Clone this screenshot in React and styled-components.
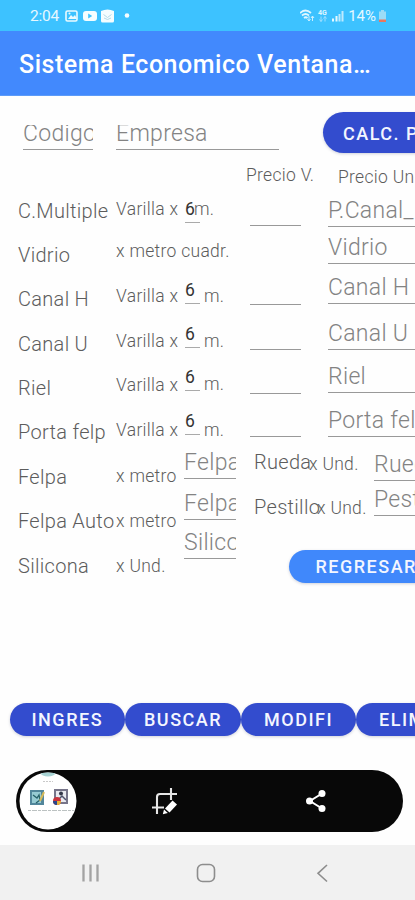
import React from "react";
import styled, { createGlobalStyle } from "styled-components";

const Global = createGlobalStyle`
  * { box-sizing: border-box; }
  body { margin: 0; background: #fefefe; }
`;

const Screen = styled.div`
  width: 415px;
  height: 900px;
  overflow: hidden;
  display: flex;
  flex-direction: column;
  background: #fefefe;
  font-family: Roboto, "Liberation Sans", sans-serif;
  white-space: nowrap;
`;

const StatusBar = styled.header`
  height: 31px;
  flex: none;
  padding: 1px 28px 0 30px;
  display: flex;
  align-items: center;
  justify-content: space-between;
  background: #3dc2ff;
  color: #e6f8ff;
  font-size: 15.5px;
`;

const StatusGroup = styled.div`
  display: flex;
  align-items: center;
  gap: ${(p) => p.$gap}px;
`;

const Clock = styled.span`
  margin-right: 2px;
  letter-spacing: -0.2px;
`;

const Battery = styled.span`
  font-size: 15px;
  letter-spacing: 0;
`;

const AppBar = styled.h1`
  height: 65px;
  flex: none;
  margin: 0;
  padding: 3px 19px 0;
  display: flex;
  align-items: center;
  background: #4289fd;
  border-bottom: 1px solid #5d9bf8;
  color: #fff;
  font-size: 25px;
  font-weight: 500;
  letter-spacing: 0.54px;
`;

const TopRow = styled.div`
  height: 64px;
  flex: none;
  display: flex;
  align-items: flex-start;
  padding: 16px 0 0 23px;
`;

const Column = styled.div`
  width: ${(p) => p.$w}px;
  flex: none;
  display: flex;
  flex-direction: column;
  margin-left: ${(p) => p.$ml || 0}px;
`;

const Columns = styled.div`
  display: flex;
  align-items: flex-start;
  height: ${(p) => p.$h}px;
  flex: none;
`;

const Slot = styled.div`
  height: ${(p) => p.$h}px;
  flex: none;
  display: flex;
  align-items: flex-end;
  margin-left: ${(p) => p.$ml || 0}px;
`;

const Label = styled.span`
  font-size: 20px;
  font-weight: 300;
  line-height: 24px;
  letter-spacing: 0.3px;
  color: #5c5c5c;
`;

const Unit = styled.span`
  font-size: 17.5px;
  font-weight: 300;
  line-height: 22px;
  letter-spacing: 0.3px;
  color: #5c5c5c;
`;

const Field = styled.div`
  width: ${(p) => p.$w}px;
  height: ${(p) => p.$clip || 30}px;
  flex: none;
  overflow: hidden;
  display: flex;
  align-items: flex-end;
  padding-bottom: 1.5px;
  border-bottom: 1px solid #999;
  color: #838383;
  font-size: 23px;
  font-weight: 300;
  line-height: 28px;
  letter-spacing: 0.3px;
`;

const Quantity = styled(Field)`
  height: 24px;
  padding-bottom: 2px;
  border-color: #aaa;
  color: #333;
  font-size: 17.5px;
  font-weight: 400;
  line-height: 22px;
`;

const Pill = styled.button`
  width: ${(p) => p.$w}px;
  height: ${(p) => p.$h || 32.5}px;
  flex: none;
  padding: 1px 0 0 ${(p) => p.$pad}px;
  margin-left: ${(p) => p.$ml || 0}px;
  border: 0;
  border-radius: 22px;
  background: ${(p) => (p.$light ? "#4088fb" : "#334cce")};
  box-shadow: 0 1px 3px rgba(40, 50, 90, 0.22);
  color: #f3f6ff;
  font: 500 18px Roboto, "Liberation Sans", sans-serif;
  letter-spacing: 1.5px;
  text-align: left;
`;

const Form = styled.main`
  height: 543px;
  flex: none;
  display: flex;
  padding-left: 18px;
`;

const Actions = styled.div`
  height: 67px;
  flex: none;
  display: flex;
  align-items: flex-start;
  padding-left: 9.5px;
`;

const CaptureBar = styled.section`
  width: 387px;
  height: 62px;
  flex: none;
  margin-left: 16px;
  border-radius: 31px;
  background: #080808;
  display: flex;
  align-items: center;
  padding-left: 3px;
`;

const CropSlot = styled.div`
  width: 26px;
  height: 28px;
  margin-left: 74px;
`;

const ShareSlot = styled.div`
  width: 22px;
  height: 24px;
  margin-left: 128px;
`;

const NavBar = styled.nav`
  height: 55px;
  flex: none;
  margin-top: 13px;
  padding-left: 81px;
  display: flex;
  align-items: center;
  background: #f1f1f1;
`;

const NavIcon = styled.svg`
  flex: none;
  margin-left: ${(p) => p.$ml || 0}px;
`;

const labels = ["C.Multiple", "Vidrio", "Canal H", "Canal U", "Riel", "Porta felp", "Felpa", "Felpa Auto", "Silicona"];

const units = [
  ["Varilla x", 60],
  ["x metro cuadr.", 42],
  ["Varilla x", 45],
  ["Varilla x", 45],
  ["Varilla x", 44],
  ["Varilla x", 45],
  ["x metro", 46],
  ["x metro", 45],
  ["x Und.", 45],
];

const quantities = [63, 81, 44, 43, 44];
const meters = [60, 87, 45, 43, 46];
const priceLines = [40, 79, 45, 44, 43];

const unitPrices = [
  ["P.Canal_M", 39],
  ["Vidrio", 37],
  ["Canal H", 40],
  ["Canal U", 46],
  ["Riel", 43],
  ["Porta felpa", 44],
];

const stock = [
  ["Felpa", 37],
  ["Felpa A", 41],
  ["Silicona", 39],
];

function StatusLeftIcons() {
  return (
    <svg width="68" height="16" viewBox="0 0 68 16">
      <rect x="2" y="3" width="11" height="10" rx="1.5" fill="none" stroke="#eafaff" strokeWidth="1.6" />
      <path d="M4 11l3-4 2 2 2-2 2 4z" fill="#eafaff" />
      <circle cx="5.5" cy="5.5" r="1" fill="#eafaff" />
      <rect x="19" y="3" width="14" height="10" rx="3" fill="#f5fdff" />
      <path d="M24.200 5.600v4.800l4-2.400z" fill="#3dc2ff" />
      <path d="M37 3Q43.500 0 50 3V13Q50 14.500 48.500 14.500H38.500Q37 14.500 37 13Z" fill="#f5fdff" />
      <path d="M39.500 6.500l4 3 4-3M40 10q3.500 3 7 0" fill="none" stroke="#b4dae8" />
      <circle cx="63" cy="7.500" r="2.300" fill="#f5fdff" />
    </svg>
  );
}

function SignalIcons() {
  return (
    <svg width="46" height="16" viewBox="0 0 46 16">
      <path d="M0 5Q5.500 0 11 5M2 7.500q3.500-3 7 0M4 10q1.800-1.500 3.500 0" fill="none" stroke="#dff6ff" strokeWidth="1.700" />
      <path d="M9 8v5m-1.500-2L9 13l1.500-2M12.500 13V8M11 10l1.500-2L14 10" fill="none" stroke="#c9efff" />
      <text x="18" y="7" fontSize="7" fontWeight="700" fill="#dff6ff">4G</text>
      <path d="M21 8.500v5m-1.500-2l1.500 2 1.500-2M25 13.500v-5m-1.500 2l1.500-2 1.500 2" fill="none" stroke="#9fdfff" />
      <path d="M33 13.500v-3M36.500 13.500V8" stroke="#e6f8ff" strokeWidth="2" />
      <path d="M39.500 13.500V6M42.500 13.500V3" stroke="#bdeaff" strokeWidth="2" />
    </svg>
  );
}

function BatteryIcon() {
  return (
    <svg width="9" height="14" viewBox="0 0 9 14">
      <path d="M3 1h3v1.500H8V13H1V2.500h2z" fill="#9bdcf7" />
      <path d="M1 10.500h7V13H1z" fill="#e8775f" />
    </svg>
  );
}

function Thumbnail() {
  return (
    <svg width="58" height="58" viewBox="0 0 58 58">
      <defs>
        <clipPath id="thumb"><circle cx="29" cy="29" r="28.500" /></clipPath>
      </defs>
      <g clipPath="url(#thumb)">
        <rect width="58" height="58" fill="#fff" />
        <ellipse cx="29" cy="1.500" rx="7" ry="3" fill="#a8d3d4" />
        <path d="M24 9.500h10" stroke="#c9c9c9" strokeDasharray="2 1" />
        <rect x="11" y="18" width="14" height="15" fill="#52869b" />
        <rect x="13" y="20" width="9" height="11" fill="#97cbd3" />
        <path d="M14 23l4 3 2-3 1 5-4 3" fill="none" stroke="#27636a" strokeWidth="1.300" />
        <path d="M25 20l-4 9" stroke="#d7ba5a" strokeWidth="2" />
        <rect x="35" y="17" width="14" height="15" fill="#77758a" />
        <rect x="37" y="19" width="10" height="11" fill="#e9e9ef" />
        <circle cx="42" cy="21.500" r="2" fill="#333849" />
        <path d="M39 28l4-4 4 4" stroke="#4e526b" strokeWidth="1.500" fill="none" />
        <circle cx="38" cy="29" r="4" fill="#c8333d" />
        <path d="M38 29h4a4 4 0 01-4 4z" fill="#e6b23a" />
        <path d="M38 29v4a4 4 0 01-4-4z" fill="#29468d" />
        <path d="M9 38.500h46" stroke="#bcc2c2" strokeDasharray="3 1 5 1" />
      </g>
    </svg>
  );
}

function CropIcon() {
  return (
    <svg width="26" height="28" viewBox="0 0 26 28">
      <path d="M1 20.500h12M6 27V10q0-3 3-3h17M20 1v12" fill="none" stroke="#e6e6e6" strokeWidth="2.100" />
      <path d="M21.500 13.500l4.500 4-7.500 8-4.500-4z" fill="#fff" />
      <path d="M13 22.500l3.800 3.500-5 1.200z" fill="#fff" />
    </svg>
  );
}

function ShareIcon() {
  return (
    <svg width="22" height="24" viewBox="0 0 22 24">
      <path d="M17 4.500L5 12l12 7.500" fill="none" stroke="#fff" strokeWidth="2" />
      <circle cx="17" cy="4.500" r="3.500" fill="#fff" />
      <circle cx="4.500" cy="12" r="3.500" fill="#fff" />
      <circle cx="17" cy="19.500" r="3.500" fill="#fff" />
    </svg>
  );
}

export default function App() {
  return (
    <Screen>
      <Global />
      <StatusBar>
        <StatusGroup $gap={3}>
          <Clock>2:04</Clock>
          <StatusLeftIcons />
        </StatusGroup>
        <StatusGroup $gap={2}>
          <SignalIcons />
          <Battery>14%</Battery>
          <BatteryIcon />
        </StatusGroup>
      </StatusBar>
      <AppBar>Sistema Economico Ventana…</AppBar>

      <TopRow>
        <Column $w={93}>
          <Slot $h={38}><Field $w={70} $clip={25}>Codigo</Field></Slot>
        </Column>
        <Column $w={207}>
          <Slot $h={38}><Field $w={163} $clip={25}>Empresa</Field></Slot>
        </Column>
        <Pill $w={150} $h={41} $pad={20}>CALC. PRECIO</Pill>
      </TopRow>

      <Form>
        <Column $w={98}>
          {labels.map((t, i) => (
            <Slot key={t} $h={i ? 44.4 : 62.5}><Label>{t}</Label></Slot>
          ))}
        </Column>
        <Column $w={68}>
          {units.map(([t, h], i) => (
            <Slot key={i} $h={h}><Unit>{t}</Unit></Slot>
          ))}
        </Column>
        <Column $w={400}>
          <Columns $h={282}>
            <Column $w={21} $ml={1}>
              {quantities.map((h, i) => (
                <Slot key={i} $h={h}><Quantity $w={15}>6</Quantity></Slot>
              ))}
            </Column>
            <Column $w={40}>
              {meters.map((h, i) => (
                <Slot key={i} $h={h} $ml={i ? -2 : -12}><Unit>m.</Unit></Slot>
              ))}
            </Column>
            <Column $w={82}>
              <Slot $h={26}><Unit>Precio V.</Unit></Slot>
              {priceLines.map((h, i) => (
                <Slot key={i} $h={h} $ml={4}><Field $w={51} /></Slot>
              ))}
            </Column>
            <Column $w={180}>
              <Slot $h={28} $ml={10}><Unit>Precio Unitario</Unit></Slot>
              {unitPrices.map(([t, h]) => (
                <Slot key={t} $h={h}><Field $w={150}>{t}</Field></Slot>
              ))}
            </Column>
          </Columns>
          <Columns $h={200}>
            <Column $w={52}>
              {stock.map(([t, h]) => (
                <Slot key={t} $h={h}><Field $w={52} $clip={27}>{t}</Field></Slot>
              ))}
            </Column>
            <Column $w={250} $ml={18}>
              <Columns $h={108}>
                <Column $w={55}>
                  <Slot $h={32}><Label>Rueda</Label></Slot>
                  <Slot $h={45}><Label>Pestillo</Label></Slot>
                </Column>
                <Column $w={65}>
                  <Slot $h={32.5}><Unit>x Und.</Unit></Slot>
                  <Slot $h={44.5} $ml={8}><Unit>x Und.</Unit></Slot>
                </Column>
                <Column $w={120}>
                  <Slot $h={39}><Field $w={100} $clip={26}>Rueda</Field></Slot>
                  <Slot $h={35}><Field $w={100}>Pestillo</Field></Slot>
                </Column>
              </Columns>
              <Pill $light $w={180} $ml={34.5} $pad={27}>REGRESAR</Pill>
            </Column>
          </Columns>
        </Column>
      </Form>

      <Actions>
        <Pill $w={115.5} $pad={22}>INGRES</Pill>
        <Pill $w={115.5} $pad={19}>BUSCAR</Pill>
        <Pill $w={115.5} $pad={23.5}>MODIFI</Pill>
        <Pill $w={115.5} $pad={23}>ELIMIN</Pill>
      </Actions>

      <CaptureBar>
        <Thumbnail />
        <CropSlot><CropIcon /></CropSlot>
        <ShareSlot><ShareIcon /></ShareSlot>
      </CaptureBar>

      <NavBar>
        <NavIcon width="20" height="20" viewBox="0 0 20 20">
          <path d="M2.500 1.500v17M9.500 1.500v17M16.500 1.500v17" stroke="#a3a3a3" strokeWidth="2.300" />
        </NavIcon>
        <NavIcon $ml={95} width="20" height="20" viewBox="0 0 20 20">
          <rect x="1.500" y="1.500" width="17" height="17" rx="5" fill="none" stroke="#8d8d8d" strokeWidth="1.600" />
        </NavIcon>
        <NavIcon $ml={99} width="14" height="20" viewBox="0 0 14 20">
          <path d="M12 2L3 10.300 12 18.500" fill="none" stroke="#8d8d8d" strokeWidth="1.600" />
        </NavIcon>
      </NavBar>
    </Screen>
  );
}
